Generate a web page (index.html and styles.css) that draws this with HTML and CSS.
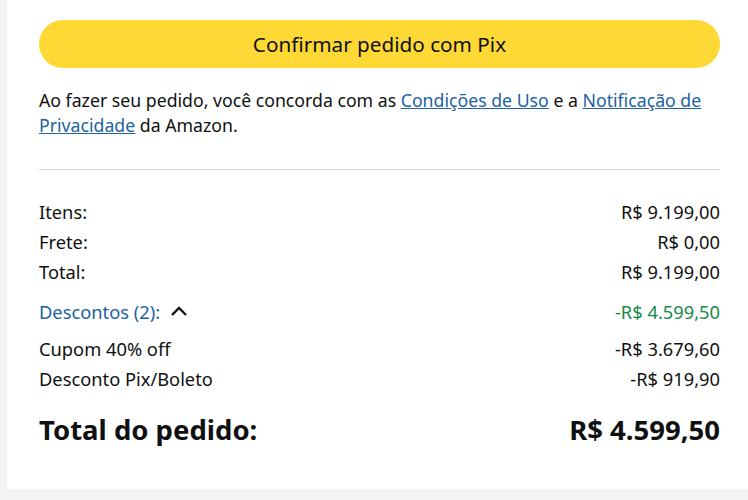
FILE: index.html
```html
<!DOCTYPE html>
<html lang="pt-BR">
<head>
  <meta charset="UTF-8">
  <title>Resumo do pedido</title>
  <link rel="stylesheet" href="styles.css">
</head>
<body>

<div class="box">
  <button class="btn">Confirmar pedido com Pix</button>

  <p class="terms">
    Ao fazer seu pedido, você concorda com as <a href="#">Condições de Uso</a> e a <a href="#">Notificação de Privacidade</a> da Amazon.
  </p>

  <hr class="divider">

  <div class="rows">
    <div class="row"><span>Itens:</span><span>R$ 9.199,00</span></div>
    <div class="row"><span>Frete:</span><span>R$ 0,00</span></div>
    <div class="row"><span>Total:</span><span>R$ 9.199,00</span></div>
  </div>

  <div class="rows discounts">
    <div class="row head">
      <span class="toggle">Descontos (2):
        <svg width="18" height="12" viewBox="0 0 18 12"><path d="M2 10 L9 3 L16 10" fill="none" stroke="#111" stroke-width="2.4"/></svg>
      </span>
      <span class="green">-R$ 4.599,50</span>
    </div>
    <div class="row"><span>Cupom 40% off</span><span>-R$ 3.679,60</span></div>
    <div class="row"><span>Desconto Pix/Boleto</span><span>-R$ 919,90</span></div>
  </div>

  <div class="grand">
    <span>Total do pedido:</span>
    <span>R$ 4.599,50</span>
  </div>
</div>

</body>
</html>
```
FILE: styles.css
```css
* { box-sizing: border-box; }
body {
  margin: 0;
  background: #f4f4f4;
  font-family: 'Noto Sans', sans-serif;
  color: #0f1111;
  padding-left: 7px;
  padding-bottom: 11px;
}
.box {
  background: #fff;
  padding: 20px 28px 30px 32px;
  height: 489px;
}
.btn {
  display: block;
  width: 100%;
  height: 48px;
  border: none;
  border-radius: 24px;
  background: #fed834;
  color: #0f1111;
  font-family: inherit;
  font-size: 20.7px;
  cursor: pointer;
}
.terms {
  margin: 20px 0 0;
  font-size: 17.7px;
  line-height: 25px;
}
.terms a {
  color: #2162a1;
  text-decoration: underline;
}
.divider {
  margin: 31px 0 0;
  border: none;
  border-top: 1px solid #d5d9d9;
}
.rows {
  margin-top: 26px;
  font-size: 18.3px;
}
.row {
  display: flex;
  justify-content: space-between;
  align-items: center;
  height: 30px;
}
.discounts { margin-top: 10px; }
.row.head { height: 37px; padding-bottom: 7px; }
.toggle {
  color: #2162a1;
  display: flex;
  align-items: center;
  gap: 10px;
}
.green { color: #178a48; }
.grand {
  display: flex;
  justify-content: space-between;
  margin-top: 18px;
  font-size: 27.5px;
  font-weight: bold;
}
```
